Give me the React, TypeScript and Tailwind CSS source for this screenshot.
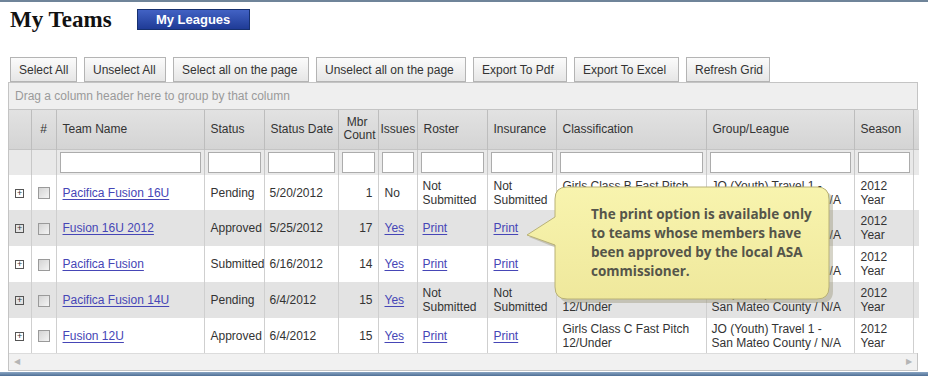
import React from 'react'

type Row = {
  team: string
  status: string
  date: string
  count: number
  issues: string
  roster: string
  insurance: string
  classA: string
  classB: string
}

const rows: Row[] = [
  { team: 'Pacifica Fusion 16U', status: 'Pending', date: '5/20/2012', count: 1, issues: 'No', roster: 'Not Submitted', insurance: 'Not Submitted', classA: 'Girls Class B Fast Pitch', classB: '16/Under' },
  { team: 'Fusion 16U 2012', status: 'Approved', date: '5/25/2012', count: 17, issues: 'Yes', roster: 'Print', insurance: 'Print', classA: 'Girls Class B Fast Pitch', classB: '16/Under' },
  { team: 'Pacifica Fusion', status: 'Submitted', date: '6/16/2012', count: 14, issues: 'Yes', roster: 'Print', insurance: 'Print', classA: 'Girls Class B Fast Pitch', classB: '16/Under' },
  { team: 'Pacifica Fusion 14U', status: 'Pending', date: '6/4/2012', count: 15, issues: 'Yes', roster: 'Not Submitted', insurance: 'Not Submitted', classA: 'Girls Class C Fast Pitch', classB: '12/Under' },
  { team: 'Fusion 12U', status: 'Approved', date: '6/4/2012', count: 15, issues: 'Yes', roster: 'Print', insurance: 'Print', classA: 'Girls Class C Fast Pitch', classB: '12/Under' },
]

const toolbar = [
  { label: 'Select All', w: 'w-[67px]' },
  { label: 'Unselect All', w: 'w-[82px]' },
  { label: 'Select all on the page', w: 'w-[136px]' },
  { label: 'Unselect all on the page', w: 'w-[150px]' },
  { label: 'Export To Pdf', w: 'w-[94px]' },
  { label: 'Export To Excel', w: 'w-[105px]' },
  { label: 'Refresh Grid', w: 'w-[84px]' },
]

const link = 'text-[#4646b6] underline underline-offset-2'

function Cell({ children, className = '' }: { children?: React.ReactNode; className?: string }) {
  return (
    <td className={`border-l border-[#cfcfcf] px-[6px] overflow-hidden whitespace-nowrap leading-[14px] ${className}`}>
      {children}
    </td>
  )
}

function TwoLine({ a, b, isLink }: { a: string; b: string; isLink?: boolean }) {
  return (
    <div className={isLink ? link : ''}>
      <div>{a}</div>
      <div>{b}</div>
    </div>
  )
}

function RosterValue({ v }: { v: string }) {
  if (v === 'Print') return <span className={link}>Print</span>
  return <TwoLine a="Not" b="Submitted" />
}

export default function App() {
  const heads = ['', '#', 'Team Name', 'Status', 'Status Date', 'Mbr Count', 'Issues', 'Roster', 'Insurance', 'Classification', 'Group/League', 'Season', '']

  return (
    <div className="relative w-[928px] h-[376px] overflow-hidden bg-white flex flex-col border-t-2 border-[#6f8499] font-['Liberation_Sans',Arial,sans-serif] text-[12px] text-[#333]">
      {/* Title */}
      <div className="flex items-center pl-[10px] mt-[6px] h-[22px]">
        <h1 className="font-['Liberation_Serif',serif] font-bold text-[23px] leading-none text-[#111]">My Teams</h1>
        <button className="ml-[25px] w-[113px] h-[21px] bg-gradient-to-b from-[#4262c4] to-[#1f3b96] border border-[#16306f] text-white font-bold text-[13px] leading-none">
          My Leagues
        </button>
      </div>

      {/* Toolbar */}
      <div className="flex gap-[7px] pl-[10px] mt-[27px]">
        {toolbar.map((b) => (
          <button
            key={b.label}
            className={`${b.w} h-[25px] border border-[#b4b4b4] bg-gradient-to-b from-[#fbfbfb] to-[#e6e6e6] text-[12px] text-[#333] text-left pl-[8px] whitespace-nowrap`}
          >
            {b.label}
          </button>
        ))}
      </div>

      {/* Grid */}
      <div className="ml-[8px] w-[910px] border border-[#c4c4c4]">
        <div className="h-[27px] bg-[#efefef] border-b border-[#c4c4c4] flex items-center pl-[6px] text-[#9a9a9a]">
          Drag a column header here to group by that column
        </div>
        <table className="table-fixed border-collapse w-full">
          <colgroup>
            <col className="w-[22px]" />
            <col className="w-[25px]" />
            <col className="w-[148px]" />
            <col className="w-[60px]" />
            <col className="w-[74px]" />
            <col className="w-[40px]" />
            <col className="w-[39px]" />
            <col className="w-[70px]" />
            <col className="w-[69px]" />
            <col className="w-[150px]" />
            <col className="w-[148px]" />
            <col className="w-[59px]" />
            <col className="w-[6px]" />
          </colgroup>
          <thead>
            <tr className="h-[39px] bg-gradient-to-b from-[#e2e2e2] to-[#d4d4d4]">
              {heads.map((h, i) => (
                <th
                  key={i}
                  className={`font-normal border-l border-[#bdbdbd] first:border-l-0 overflow-hidden whitespace-nowrap leading-[13px] ${
                    i === 1 ? 'text-center' : i === 5 ? 'text-right pr-[2px]' : i === 6 ? 'text-left pl-[2px]' : 'text-left px-[6px]'
                  }`}
                >
                  {i === 5 ? (
                    <>
                      <div className="pr-[8px]">Mbr</div>
                      <div>Count</div>
                    </>
                  ) : (
                    h
                  )}
                </th>
              ))}
            </tr>
            <tr className="h-[26px] bg-[#e9e9e9] border-t border-[#c4c4c4]">
              {heads.map((_, i) => (
                <th key={i} className="border-l border-[#c8c8c8] first:border-l-0 px-[3px] font-normal">
                  {i >= 2 && i <= 11 && <div className="h-[21px] bg-white border border-[#acacac]" />}
                </th>
              ))}
            </tr>
          </thead>
          <tbody>
            {rows.map((r, idx) => (
              <tr key={r.team} className={`${idx === 0 || idx === 4 ? 'h-[35px]' : 'h-[36px]'} ${idx % 2 ? 'bg-[#e3e3e3]' : 'bg-white'}`}>
                <td className="text-center">
                  <span className="inline-flex w-[9px] h-[9px] border border-[#555] items-center justify-center text-[9px] leading-none text-[#333] align-middle">
                    +
                  </span>
                </td>
                <Cell className="text-center">
                  <span className="inline-block w-[12px] h-[12px] border border-[#9a9a9a] bg-gradient-to-br from-[#d4d4d4] to-[#f4f4f4] align-middle" />
                </Cell>
                <Cell>
                  <span className={link}>{r.team}</span>
                </Cell>
                <Cell>{r.status}</Cell>
                <Cell className="pl-[5px]">{r.date}</Cell>
                <Cell className="text-right pr-[5px]">{r.count}</Cell>
                <Cell>{r.issues === 'Yes' ? <span className={link}>Yes</span> : 'No'}</Cell>
                <Cell className="pl-[5px]">
                  <RosterValue v={r.roster} />
                </Cell>
                <Cell>
                  <RosterValue v={r.insurance} />
                </Cell>
                <Cell>
                  <TwoLine a={r.classA} b={r.classB} />
                </Cell>
                <Cell className="pl-[5px]">
                  <TwoLine a="JO (Youth) Travel 1 -" b="San Mateo County / N/A" />
                </Cell>
                <Cell>
                  <TwoLine a="2012" b="Year" />
                </Cell>
                <Cell />
              </tr>
            ))}
          </tbody>
        </table>
        <div className="h-[17px] bg-[#f1f1f1] border-t border-[#dcdcdc] flex items-center justify-between px-[5px] text-[8px] text-[#b5b5b5]">
          <span>◀</span>
          <span>▶</span>
        </div>
      </div>

      <div className="mt-auto h-[4px] bg-gradient-to-b from-[#8aa6c4] to-[#4f6f95]" />

      {/* Callout */}
      <div className="absolute left-[527px] top-[183px] w-[308px] h-[120px]">
        <svg className="absolute left-0 top-0" width="308" height="120" viewBox="0 0 308 120">
          <defs>
            <linearGradient id="cg" x1="0" y1="0" x2="0" y2="1">
              <stop offset="0" stopColor="#f8f4ae" />
              <stop offset="1" stopColor="#efe89c" />
            </linearGradient>
          </defs>
          <path
            d="M42 4 H292 Q304 4 304 16 V104 Q304 116 292 116 H42 Q30 116 30 104 V62 L0 50 L30 34 V16 Q30 4 42 4 Z"
            fill="#8a8560"
            opacity="0.35"
            transform="translate(2 2)"
          />
          <path
            d="M40 2 H290 Q302 2 302 14 V102 Q302 114 290 114 H40 Q28 114 28 102 V60 L0 50 L28 32 V14 Q28 2 40 2 Z"
            fill="url(#cg)"
            stroke="#b8b177"
            strokeWidth="1"
          />
        </svg>
        <div className="absolute left-[64px] top-[20px] font-['Open_Sans',sans-serif] font-bold text-[13.5px] leading-[19px] text-[#55554a] whitespace-nowrap">
          <div>The print option is available only</div>
          <div>to teams whose members have</div>
          <div>been approved by the local ASA</div>
          <div>commissioner.</div>
        </div>
      </div>
    </div>
  )
}
